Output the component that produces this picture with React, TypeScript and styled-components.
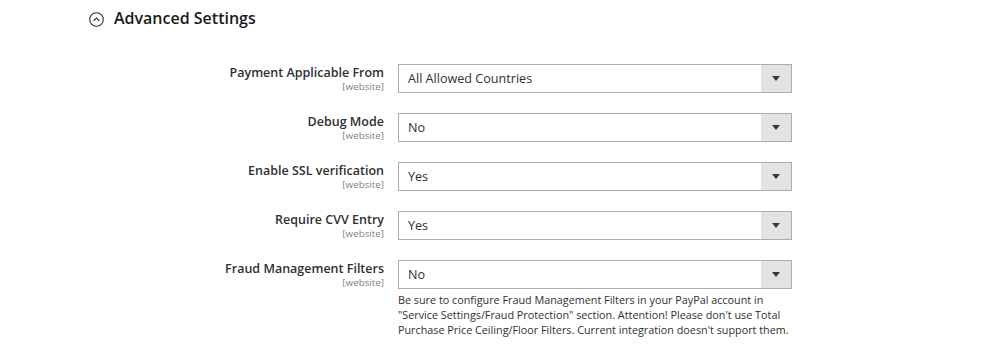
import React from "react";
import styled, { createGlobalStyle } from "styled-components";

const Global = createGlobalStyle`
  html, body { margin: 0; padding: 0; background: #fff; }
  body { font-family: "Open Sans", "Liberation Sans", sans-serif; color: #303030; }
`;

const Page = styled.div`
  width: 1000px;
  height: 351px;
  overflow: hidden;
  box-sizing: border-box;
  padding: 6px 0 0 89px;
`;

const Header = styled.div`
  display: flex;
  align-items: center;
  gap: 10px;
  height: 24px;
  font-size: 16px;
  font-weight: 600;
  color: #1a1a1a;
`;

const Fields = styled.div`
  display: flex;
  flex-direction: column;
  gap: 20px;
  margin-top: 34px;
`;

const Row = styled.div`
  display: grid;
  grid-template-columns: 295px 394px;
  column-gap: 14px;
`;

const LabelCol = styled.div`
  display: flex;
  flex-direction: column;
  align-items: flex-end;
`;

const LabelText = styled.span`
  font-size: 12.5px;
  font-weight: 600;
  line-height: 17px;
  color: #303030;
`;

const Scope = styled.span`
  font-size: 9.8px;
  line-height: 11px;
  color: #808080;
`;

const ControlCol = styled.div`
  display: flex;
  flex-direction: column;
`;

const Select = styled.div`
  display: flex;
  height: 29px;
  box-sizing: border-box;
  border: 1px solid #adadad;
  background: #fff;
`;

const Value = styled.div`
  flex: 1;
  padding-left: 9px;
  font-size: 12.6px;
  line-height: 27px;
  color: #303030;
`;

const ArrowBox = styled.div`
  width: 30px;
  background: #e3e3e3;
  display: flex;
  align-items: center;
  justify-content: center;
`;

const Triangle = styled.div`
  width: 0;
  height: 0;
  border-left: 4.5px solid transparent;
  border-right: 4.5px solid transparent;
  border-top: 5px solid #41362f;
`;

const Note = styled.div`
  margin-top: 3px;
  font-size: 10.8px;
  line-height: 15px;
  color: #303030;
`;

const rows = [
  { label: "Payment Applicable From", value: "All Allowed Countries" },
  { label: "Debug Mode", value: "No" },
  { label: "Enable SSL verification", value: "Yes" },
  { label: "Require CVV Entry", value: "Yes" },
  {
    label: "Fraud Management Filters",
    value: "No",
    note: (
      <>
        Be sure to configure Fraud Management Filters in your PayPal account in
        <br />
        "Service Settings/Fraud Protection" section. Attention! Please don't use Total
        <br />
        Purchase Price Ceiling/Floor Filters. Current integration doesn't support them.
      </>
    ),
  },
];

export default function App() {
  return (
    <>
      <Global />
      <Page>
        <Header>
          <svg width="15" height="15" viewBox="0 0 15 15" style={{ marginTop: 3 }}>
            <circle cx="7.5" cy="7.5" r="6.8" fill="none" stroke="#303030" strokeWidth="1.1" />
            <path d="M4.6 8.9 L7.5 6 L10.4 8.9" fill="none" stroke="#303030" strokeWidth="1.2" />
          </svg>
          Advanced Settings
        </Header>
        <Fields>
          {rows.map((r) => (
            <Row key={r.label}>
              <LabelCol>
                <LabelText>{r.label}</LabelText>
                <Scope>[website]</Scope>
              </LabelCol>
              <ControlCol>
                <Select>
                  <Value>{r.value}</Value>
                  <ArrowBox>
                    <Triangle />
                  </ArrowBox>
                </Select>
                {r.note && <Note>{r.note}</Note>}
              </ControlCol>
            </Row>
          ))}
        </Fields>
      </Page>
    </>
  );
}
